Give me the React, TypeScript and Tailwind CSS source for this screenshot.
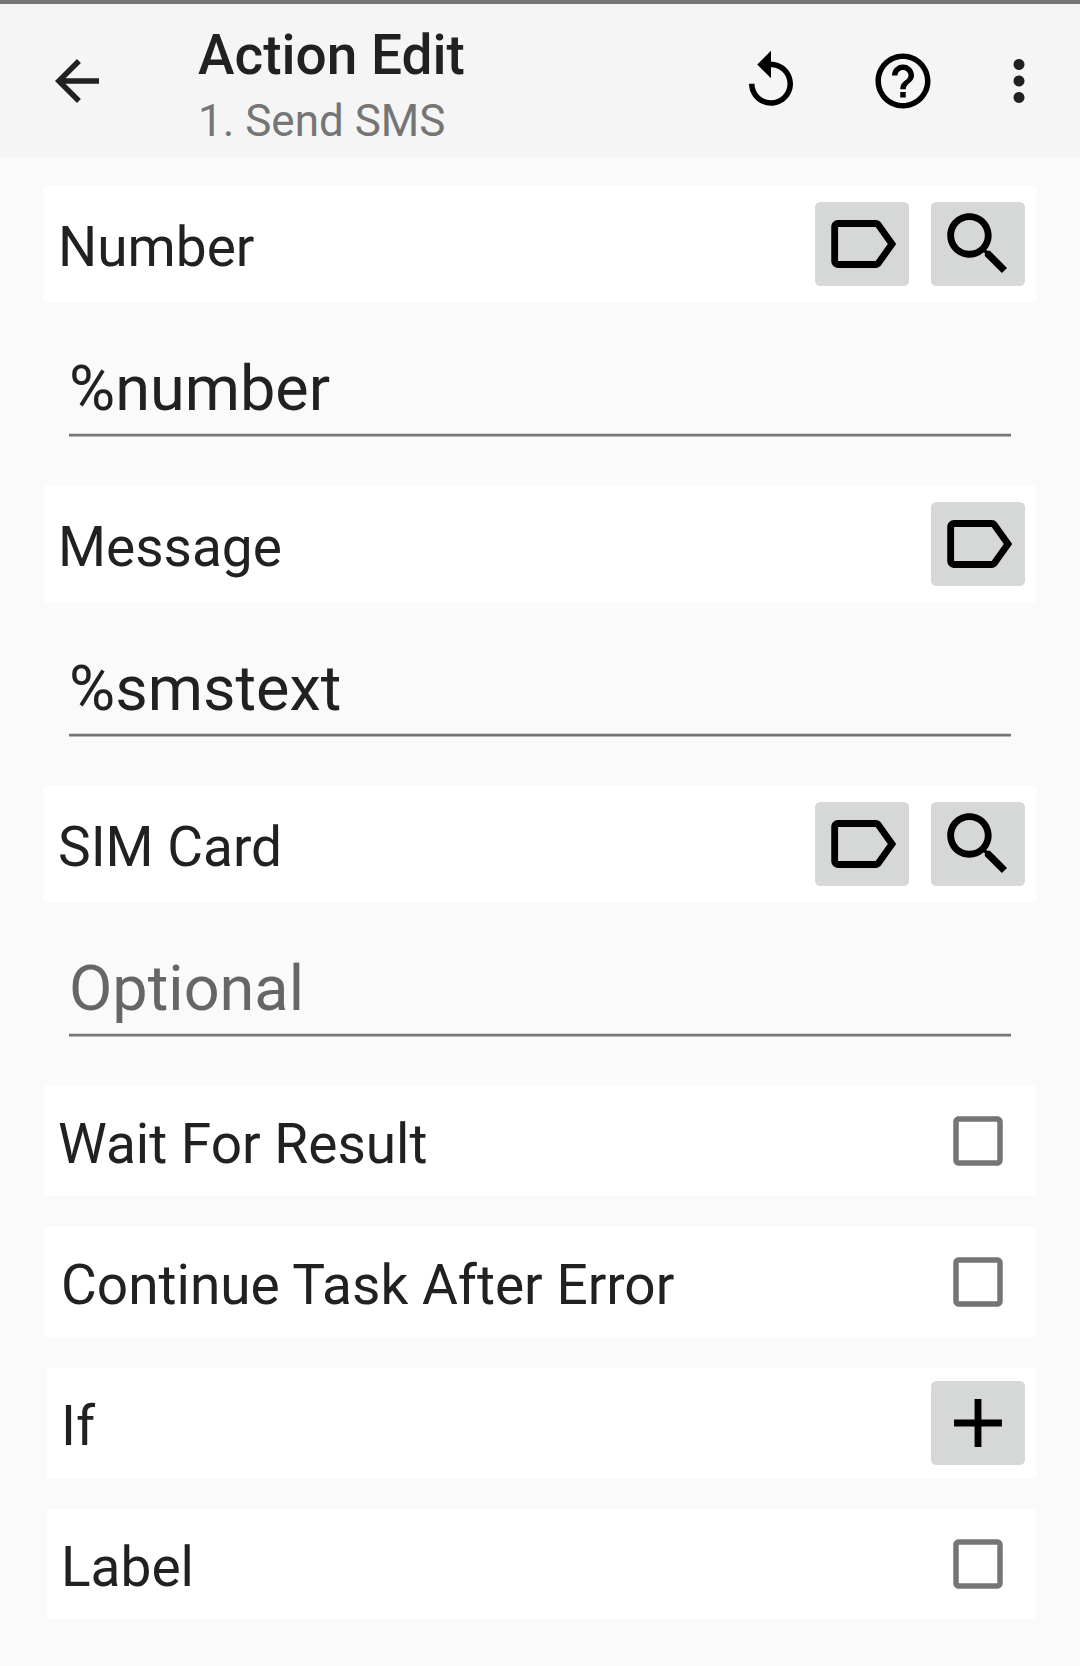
import React from "react";

const icons = {
  back: "M20 11H7.83l5.59-5.59L12 4l-8 8 8 8 1.41-1.41L7.83 13H20v-2z",
  replay:
    "M12 5V1L7 6l5 5V7c3.31 0 6 2.69 6 6s-2.69 6-6 6-6-2.69-6-6H4c0 4.42 3.58 8 8 8s8-3.58 8-8-3.58-8-8-8z",
  help: "M11 18h2v-2h-2v2zm1-16C6.48 2 2 6.48 2 12s4.48 10 10 10 10-4.48 10-10S17.52 2 12 2zm0 18c-4.41 0-8-3.59-8-8s3.59-8 8-8 8 3.59 8 8-3.59 8-8 8zm0-14c-2.21 0-4 1.79-4 4h2c0-1.1.9-2 2-2s2 .9 2 2c0 2-3 1.75-3 5h2c0-2.25 3-2.5 3-5 0-2.21-1.79-4-4-4z",
  more: "M12 8c1.1 0 2-.9 2-2s-.9-2-2-2-2 .9-2 2 .9 2 2 2zm0 2c-1.1 0-2 .9-2 2s.9 2 2 2 2-.9 2-2-.9-2-2-2zm0 6c-1.1 0-2 .9-2 2s.9 2 2 2 2-.9 2-2-.9-2-2-2z",
  tag: "M17.63 5.84C17.27 5.33 16.67 5 16 5L5 5.01C3.9 5.01 3 5.9 3 7v10c0 1.1.9 1.99 2 1.99L16 19c.67 0 1.27-.33 1.63-.84L22 12l-4.37-6.16zM16 17H5V7h11l3.55 5L16 17z",
  search:
    "M15.5 14h-.79l-.28-.27C15.41 12.59 16 11.11 16 9.5 16 5.91 13.09 3 9.5 3S3 5.91 3 9.5 5.91 16 9.5 16c1.61 0 3.09-.59 4.23-1.57l.27.28v.79l5 4.99L20.49 19l-4.99-5zm-6 0C7.01 14 5 11.99 5 9.5S7.01 5 9.5 5 14 7.01 14 9.5 11.99 14 9.5 14z",
  plus: "M19 13h-6v6h-2v-6H5v-2h6V5h2v6h6v2z",
  checkbox:
    "M19 5v14H5V5h14m0-2H5c-1.1 0-2 .9-2 2v14c0 1.1.9 2 2 2h14c1.1 0 2-.9 2-2V5c0-1.1-.9-2-2-2z",
};

type IconName = keyof typeof icons;

function Icon({ name, className }: { name: IconName; className: string }) {
  return (
    <svg viewBox="0 0 24 24" fill="currentColor" className={`shrink-0 ${className}`}>
      <path d={icons[name]} />
    </svg>
  );
}

function IconButton({ name }: { name: IconName }) {
  return (
    <button className="flex h-[84px] w-[94px] items-center justify-center rounded-[5.5px] bg-[#d6d7d7] text-black">
      <Icon name={name} className="size-[82px]" />
    </button>
  );
}

function Checkbox() {
  return (
    <button className="mr-[14px] text-[#757575]">
      <Icon name="checkbox" className="size-[66px]" />
    </button>
  );
}

function Row({ label, className, children }: { label: string; className: string; children: React.ReactNode }) {
  return (
    <div className={`mr-11 flex items-center justify-between bg-white pr-[11px] ${className}`}>
      <span className="pt-[6px] text-[55px] leading-[64px]">{label}</span>
      <div className="flex gap-[22px]">{children}</div>
    </div>
  );
}

function Field({ label, value, hint, buttons }: { label: string; value?: string; hint?: string; buttons: IconName[] }) {
  return (
    <section className="h-[300px]">
      <Row label={label} className="ml-11 h-[116px] pl-[14px]">
        {buttons.map((b) => (
          <IconButton key={b} name={b} />
        ))}
      </Row>
      <div className="mx-[69px] flex h-[134px] items-end border-b-2 border-[#757575] pb-2 text-[63px] leading-[74px] shadow-[0_1px_0_#b7b7b7,inset_0_-1px_0_#d9d9d9]">
        {value ? <span>{value}</span> : <span className="text-[#666666]">{hint}</span>}
      </div>
    </section>
  );
}

export default function App() {
  return (
    <div className="h-[1666px] w-[1080px] overflow-hidden bg-[#fafafa] font-['Roboto',sans-serif] text-[#212121]">
      <div className="h-1 bg-[#757575]" />
      <header className="flex h-[154px] items-center bg-[#f5f5f5] pl-11">
        <Icon name="back" className="size-[66px]" />
        <div className="ml-[88px] flex-1 pt-2">
          <h1 className="text-[55px] leading-[64px] font-medium">Action Edit</h1>
          <p className="mt-2 text-[44px] leading-[52px] text-[#757575]">1. Send SMS</p>
        </div>
        <Icon name="replay" className="size-[66px] text-black" />
        <Icon name="help" className="ml-[66px] size-[66px] text-black" />
        <Icon name="more" className="mr-[28px] ml-[50px] size-[66px]" />
      </header>
      <main className="pt-7">
        <Field label="Number" value="%number" buttons={["tag", "search"]} />
        <Field label="Message" value="%smstext" buttons={["tag"]} />
        <Field label="SIM Card" hint="Optional" buttons={["tag", "search"]} />
        <div className="flex flex-col gap-[31px]">
          <Row label="Wait For Result" className="ml-11 h-[110px] pl-[14px]">
            <Checkbox />
          </Row>
          <Row label="Continue Task After Error" className="ml-11 h-[110px] pl-[17px]">
            <Checkbox />
          </Row>
          <Row label="If" className="ml-[47px] h-[110px] pl-[14px]">
            <IconButton name="plus" />
          </Row>
          <Row label="Label" className="ml-[47px] h-[110px] pl-[14px]">
            <Checkbox />
          </Row>
        </div>
      </main>
    </div>
  );
}
